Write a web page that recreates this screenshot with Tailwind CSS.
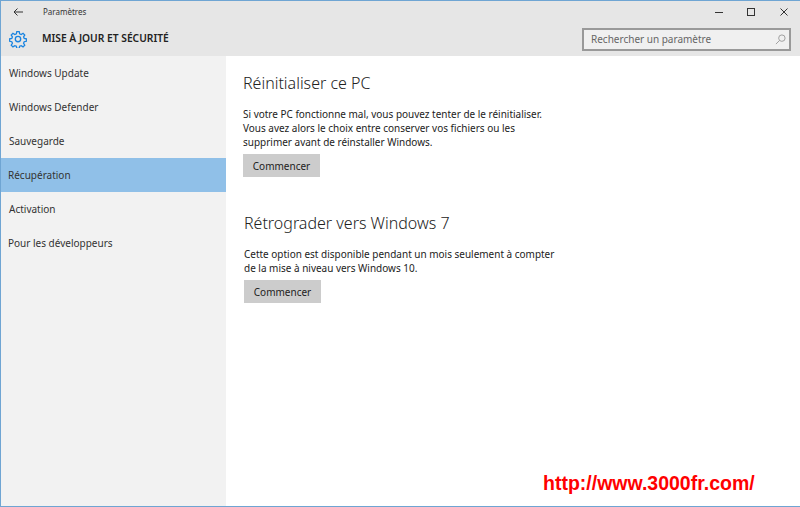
<!DOCTYPE html>
<html lang="fr">
<head>
    <meta charset="UTF-8">
    <title>Paramètres</title>
    <script src="https://cdn.jsdelivr.net/npm/@tailwindcss/browser@4"></script>
</head>
<body class="bg-white">
    <div class="relative w-[800px] h-[507px] overflow-hidden flex flex-col border border-[#6fa5d3] border-r-0 font-['Noto_Sans','Open_Sans',sans-serif] text-[#222]">
        <!-- barre de titre -->
        <header class="bg-[#e6e6e6] h-[55px] shrink-0">
            <div class="flex items-center h-[21px]">
                <svg class="ml-[12px] w-[10px] h-[10px]" viewBox="0 0 10 10" fill="none" stroke="#333" stroke-width="1"><path d="M10 5H1M4.500 1.500 1 5l3.500 3.500"/></svg>
                <span class="ml-[20px] text-[8px] text-[#333]">Paramètres</span>
                <div class="ml-auto flex items-center text-[#333]">
                    <svg class="w-[8px] h-[8px] mr-[24px]" viewBox="0 0 8 8" stroke="#333" fill="none"><path d="M0 4.500h8"/></svg>
                    <svg class="w-[8px] h-[8px] mr-[25px]" viewBox="0 0 8 8" stroke="#333" fill="none"><rect x=".5" y=".5" width="7" height="7"/></svg>
                    <svg class="w-[8px] h-[8px] mr-[12px]" viewBox="0 0 8 8" stroke="#333" fill="none"><path d="M.5.5l7 7M7.500.5l-7 7"/></svg>
                </div>
            </div>
            <div class="flex items-center h-[34px]">
                <svg class="ml-[8px] w-[18px] h-[18px]" viewBox="0 0 24 24" fill="none" stroke="#1a84e0" stroke-width="1.8"><circle cx="12" cy="12" r="3.6"/><path d="M10.3 1.8h3.4l.6 3 2.2.9 2.6-1.700 2.400 2.400-1.700 2.600.9 2.200 3 .6v3.400l-3 .6-.9 2.200 1.700 2.600-2.400 2.400-2.600-1.700-2.200.9-.6 3h-3.400l-.6-3-2.200-.9-2.600 1.700-2.400-2.400 1.700-2.600-.9-2.200-3-.6v-3.400l3-.6.9-2.200-1.700-2.600 2.400-2.400 2.600 1.700 2.200-.9z" transform="translate(.6 .6) scale(.95)"/></svg>
                <h1 class="ml-[15px] text-[10.25px] font-semibold text-[#222]">MISE À JOUR ET SÉCURITÉ</h1>
                <div class="ml-auto mr-[9px] mt-[1px] flex items-center w-[209px] h-[23px] bg-[#f0f0f0] border-2 border-[#999] pl-[7px] pr-[3px]">
                    <span class="text-[10px] text-[#666]">Rechercher un paramètre</span>
                    <svg class="ml-auto w-[11px] h-[11px]" viewBox="0 0 12 12" fill="none" stroke="#999"><circle cx="7.500" cy="4.500" r="3.500"/><path d="M5 7 1 11"/></svg>
                </div>
            </div>
        </header>
        <div class="flex flex-1 min-h-0">
            <!-- menu -->
            <nav class="w-[225px] shrink-0 bg-[#f2f2f2] text-[10px] text-[#333]">
                <div class="h-[34px] flex items-center pl-[8px]">Windows Update</div>
                <div class="h-[34px] flex items-center pl-[8px]">Windows Defender</div>
                <div class="h-[34px] flex items-center pl-[8px]">Sauvegarde</div>
                <div class="h-[34px] flex items-center pl-[7px] bg-[#90c0e8]">Récupération</div>
                <div class="h-[34px] flex items-center pl-[8px]">Activation</div>
                <div class="h-[34px] flex items-center pl-[7px]">Pour les développeurs</div>
            </nav>
            <main class="flex-1 pl-[17px]">
                <section class="pt-[16px]">
                    <h2 class="text-[16px] font-light leading-[22px] text-[#222]">Réinitialiser ce PC</h2>
                    <p class="mt-[13px] text-[9.97px] leading-[14px] text-[#222]">Si votre PC fonctionne mal, vous pouvez tenter de le réinitialiser.<br>Vous avez alors le choix entre conserver vos fichiers ou les<br>supprimer avant de réinstaller Windows.</p>
                    <button class="mt-[5px] block w-[77px] h-[23px] pt-[1px] bg-[#cccccc] text-[10px] text-[#222]">Commencer</button>
                </section>
                <section class="pt-[35px] pl-[1px]">
                    <h2 class="text-[16px] font-light leading-[22px] text-[#222]">Rétrograder vers Windows 7</h2>
                    <p class="mt-[13px] text-[9.97px] leading-[14px] text-[#222]">Cette option est disponible pendant un mois seulement à compter<br>de la mise à niveau vers Windows 10.</p>
                    <button class="mt-[5px] block w-[77px] h-[23px] pt-[1px] bg-[#cccccc] text-[10px] text-[#222]">Commencer</button>
                </section>
            </main>
        </div>
        <!-- filigrane -->
        <span class="absolute left-[542px] top-[471px] font-['Liberation_Sans',sans-serif] font-bold text-[19.5px] leading-[22px] text-[#ff0000]">http://www.3000fr.com/</span>
    </div>
</body>
</html>
